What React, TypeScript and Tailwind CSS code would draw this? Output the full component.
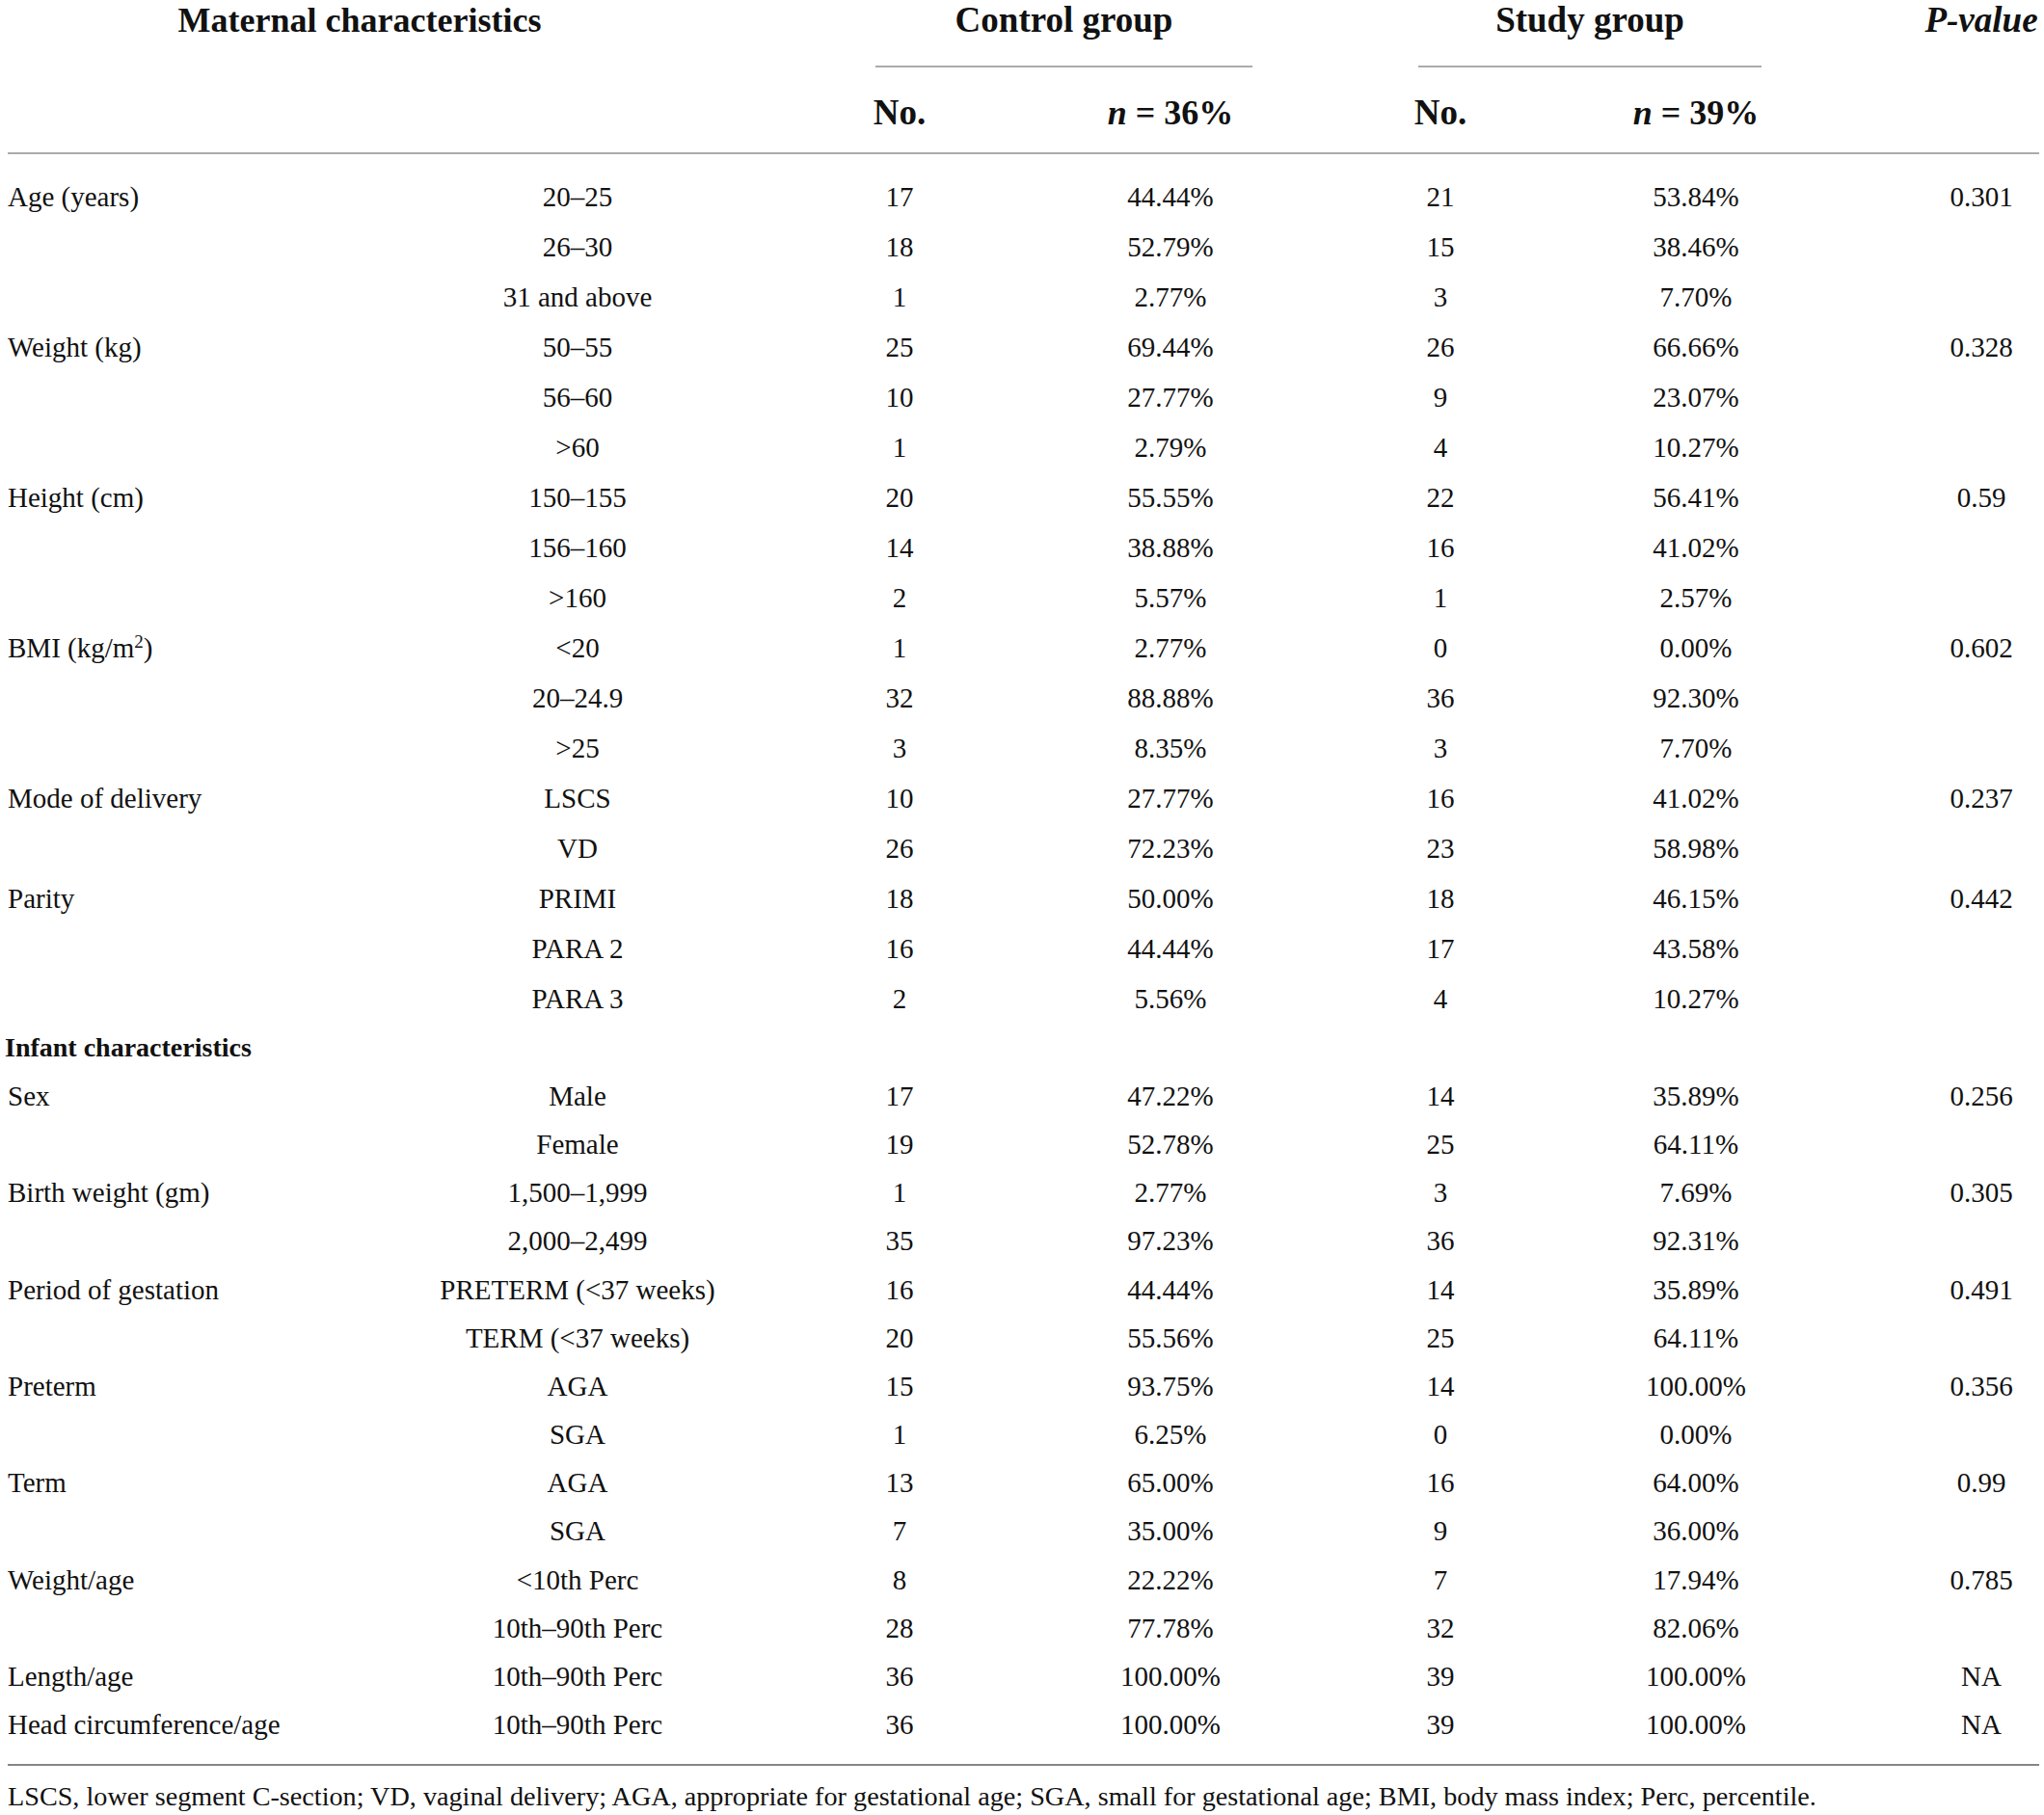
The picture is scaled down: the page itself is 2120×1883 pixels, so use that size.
import React from "react";

type Row = {
	label?: string;
	sub: React.ReactNode;
	c1: string;
	p1: string;
	c2: string;
	p2: string;
	pv?: string;
};

const maternal: Row[] = [
	{ label: "Age (years)", sub: "20–25", c1: "17", p1: "44.44%", c2: "21", p2: "53.84%", pv: "0.301" },
	{ sub: "26–30", c1: "18", p1: "52.79%", c2: "15", p2: "38.46%" },
	{ sub: "31 and above", c1: "1", p1: "2.77%", c2: "3", p2: "7.70%" },
	{ label: "Weight (kg)", sub: "50–55", c1: "25", p1: "69.44%", c2: "26", p2: "66.66%", pv: "0.328" },
	{ sub: "56–60", c1: "10", p1: "27.77%", c2: "9", p2: "23.07%" },
	{ sub: ">60", c1: "1", p1: "2.79%", c2: "4", p2: "10.27%" },
	{ label: "Height (cm)", sub: "150–155", c1: "20", p1: "55.55%", c2: "22", p2: "56.41%", pv: "0.59" },
	{ sub: "156–160", c1: "14", p1: "38.88%", c2: "16", p2: "41.02%" },
	{ sub: ">160", c1: "2", p1: "5.57%", c2: "1", p2: "2.57%" },
	{ label: "BMI", sub: "<20", c1: "1", p1: "2.77%", c2: "0", p2: "0.00%", pv: "0.602" },
	{ sub: "20–24.9", c1: "32", p1: "88.88%", c2: "36", p2: "92.30%" },
	{ sub: ">25", c1: "3", p1: "8.35%", c2: "3", p2: "7.70%" },
	{ label: "Mode of delivery", sub: "LSCS", c1: "10", p1: "27.77%", c2: "16", p2: "41.02%", pv: "0.237" },
	{ sub: "VD", c1: "26", p1: "72.23%", c2: "23", p2: "58.98%" },
	{ label: "Parity", sub: "PRIMI", c1: "18", p1: "50.00%", c2: "18", p2: "46.15%", pv: "0.442" },
	{ sub: "PARA 2", c1: "16", p1: "44.44%", c2: "17", p2: "43.58%" },
	{ sub: "PARA 3", c1: "2", p1: "5.56%", c2: "4", p2: "10.27%" },
];

const infant: Row[] = [
	{ label: "Sex", sub: "Male", c1: "17", p1: "47.22%", c2: "14", p2: "35.89%", pv: "0.256" },
	{ sub: "Female", c1: "19", p1: "52.78%", c2: "25", p2: "64.11%" },
	{ label: "Birth weight (gm)", sub: "1,500–1,999", c1: "1", p1: "2.77%", c2: "3", p2: "7.69%", pv: "0.305" },
	{ sub: "2,000–2,499", c1: "35", p1: "97.23%", c2: "36", p2: "92.31%" },
	{ label: "Period of gestation", sub: "PRETERM (<37 weeks)", c1: "16", p1: "44.44%", c2: "14", p2: "35.89%", pv: "0.491" },
	{ sub: "TERM (<37 weeks)", c1: "20", p1: "55.56%", c2: "25", p2: "64.11%" },
	{ label: "Preterm", sub: "AGA", c1: "15", p1: "93.75%", c2: "14", p2: "100.00%", pv: "0.356" },
	{ sub: "SGA", c1: "1", p1: "6.25%", c2: "0", p2: "0.00%" },
	{ label: "Term", sub: "AGA", c1: "13", p1: "65.00%", c2: "16", p2: "64.00%", pv: "0.99" },
	{ sub: "SGA", c1: "7", p1: "35.00%", c2: "9", p2: "36.00%" },
	{ label: "Weight/age", sub: "<10th Perc", c1: "8", p1: "22.22%", c2: "7", p2: "17.94%", pv: "0.785" },
	{ sub: "10th–90th Perc", c1: "28", p1: "77.78%", c2: "32", p2: "82.06%" },
	{ label: "Length/age", sub: "10th–90th Perc", c1: "36", p1: "100.00%", c2: "39", p2: "100.00%", pv: "NA" },
	{ label: "Head circumference/age", sub: "10th–90th Perc", c1: "36", p1: "100.00%", c2: "39", p2: "100.00%", pv: "NA" },
];

const cols = "grid grid-cols-[287px_608px_60px_502px_58px_472px_120px] items-center";
const cell = "flex justify-center whitespace-nowrap";

const DataRow: React.FC<{ row: Row; tall: boolean }> = ({ row, tall }) => (
	<div className={`${cols} ${tall ? "h-[52px]" : "h-[50.2px]"}`}>
		<div className="whitespace-nowrap">
			{row.label === "BMI" ? (
				<span>
					BMI (kg/m<sup className="text-[19px]">2</sup>)
				</span>
			) : (
				row.label
			)}
		</div>
		<div className={cell}>{row.sub}</div>
		<div className={cell}>{row.c1}</div>
		<div className={cell}>{row.p1}</div>
		<div className={cell}>{row.c2}</div>
		<div className={cell}>{row.p2}</div>
		<div className={cell}>{row.pv}</div>
	</div>
);

export default function App() {
	return (
		<div
			className="w-[2120px] h-[1883px] bg-white text-[#111] pl-[8px] pr-[5px]"
			style={{ fontFamily: '"Liberation Serif", "Times New Roman", serif' }}
		>
			{/* header */}
			<div className="flex h-[70px] text-[37px] font-bold leading-[42px]">
				<div className="w-[730px] text-center text-[36px]">Maternal characteristics</div>
				<div className="w-[170px]" />
				<div className="w-[391px] text-center border-b-2 border-[#ababab]">Control group</div>
				<div className="w-[172px]" />
				<div className="w-[356px] text-center border-b-2 border-[#ababab]">Study group</div>
				<div className="w-[168px]" />
				<div className="w-[120px] flex justify-center whitespace-nowrap italic">P-value</div>
			</div>
			<div className={`${cols} h-[90px] pt-[6px] text-[36px] font-bold border-b-2 border-[#ababab]`}>
				<div />
				<div />
				<div className={`${cell} text-[37px]`}>No.</div>
				<div className={cell}>
					<span>
						<i>n</i> = 36%
					</span>
				</div>
				<div className={`${cell} text-[37px]`}>No.</div>
				<div className={cell}>
					<span>
						<i>n</i> = 39%
					</span>
				</div>
				<div />
			</div>

			{/* body */}
			<div className="pt-[18px] text-[29px] leading-none">
				{maternal.map((r, i) => (
					<DataRow key={i} row={r} tall />
				))}
				<div className="h-[50.2px] flex items-center text-[28px] font-bold -ml-[3px]">Infant characteristics</div>
				{infant.map((r, i) => (
					<DataRow key={i} row={r} tall={false} />
				))}
			</div>

			<div className="mt-[15px] border-t-2 border-[#858585] pt-[14px] text-[28.2px] leading-[36px] whitespace-nowrap">
				LSCS, lower segment C-section; VD, vaginal delivery; AGA, appropriate for gestational age; SGA, small for
				gestational age; BMI, body mass index; Perc, percentile.
			</div>
		</div>
	);
}
